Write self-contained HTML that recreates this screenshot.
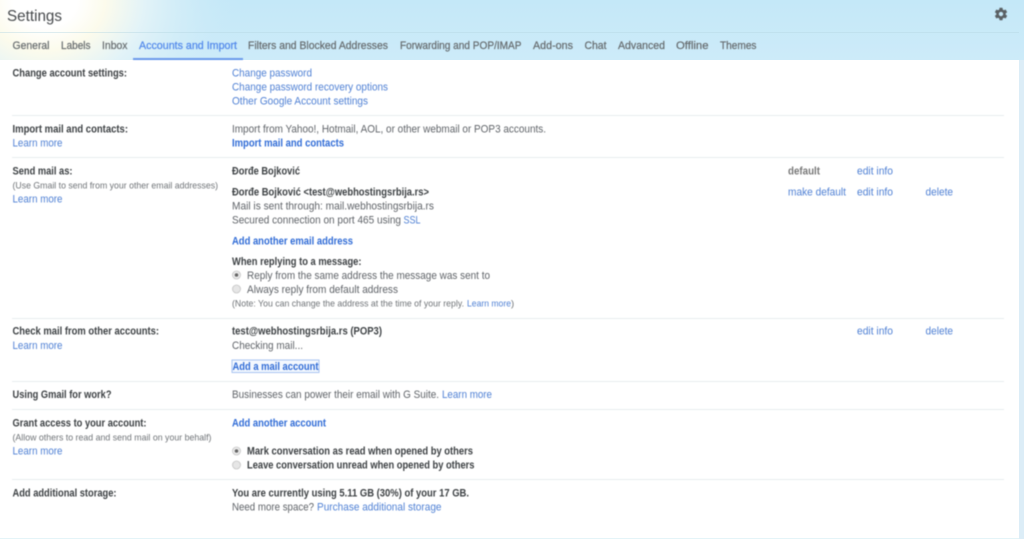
<!DOCTYPE html>
<html><head><meta charset="utf-8"><title>Settings</title>
<style>
html,body{margin:0;padding:0;background:#c5e8f8;width:1024px;height:539px;overflow:hidden}
svg{display:block}
.fg{filter:blur(.5px)}
text{font-family:"Liberation Sans",sans-serif;font-size:11px;fill:#5f6368;white-space:pre}
.b{font-weight:bold;fill:#3c4043}
.l{fill:#4f80d4}
.lb{font-weight:bold;fill:#2f6bd6}
.s{font-size:9.5px;fill:#6f7377}
.t{font-size:11px;fill:#666b6e;stroke:#666b6e;stroke-width:.22px}
</style></head><body>
<svg width="1024" height="539" viewBox="0 0 1024 539" xmlns="http://www.w3.org/2000/svg">
<defs>
<radialGradient id="g" cx="45" cy="0" r="200" gradientUnits="userSpaceOnUse" gradientTransform="scale(1 .85)">
<stop offset="0" stop-color="#ffffff"/><stop offset=".16" stop-color="#ffffff"/><stop offset=".3" stop-color="#fcfbec"/><stop offset=".5" stop-color="#e2f3f8"/><stop offset="1" stop-color="#c5e8f8" stop-opacity="0"/>
</radialGradient>
<linearGradient id="r" x1="0" y1="0" x2="0" y2="1"><stop offset="0" stop-color="#c4e8f8"/><stop offset="1" stop-color="#cdebf9"/></linearGradient>
</defs>
<rect width="1024" height="539" fill="#dcedf7"/>
<rect width="1024" height="60" fill="url(#r)"/>
<rect width="320" height="60" fill="url(#g)"/>
<rect x="0" y="60" width="1019" height="478" fill="#fff"/>
<rect x="0" y="538" width="1019" height="1" fill="#e4f4f8"/>
<rect x="0" y="32" width="1019" height="1" fill="#b5d6e3" opacity=".45"/>

<g class="fg">
<text x="7" y="21" style="font-size:16px;fill:#45484b" textLength="55" lengthAdjust="spacingAndGlyphs">Settings</text>
<path transform="translate(993.500,6.500) scale(.625)" fill="#5a6064" d="M19.43 12.98c.04-.32.07-.64.07-.98s-.03-.66-.07-.98l2.11-1.65c.19-.15.24-.42.12-.64l-2-3.46c-.12-.22-.39-.3-.61-.22l-2.49 1c-.52-.4-1.08-.73-1.69-.98l-.38-2.65C14.46 2.18 14.25 2 14 2h-4c-.25 0-.46.18-.49.42l-.38 2.65c-.61.25-1.17.59-1.69.98l-2.49-1c-.23-.09-.49 0-.61.22l-2 3.46c-.13.22-.07.49.12.64l2.11 1.65c-.04.32-.07.65-.07.98s.03.66.07.98l-2.11 1.65c-.19.15-.24.42-.12.64l2 3.46c.12.22.39.3.61.22l2.49-1c.52.4 1.08.73 1.69.98l.38 2.65c.03.24.24.42.49.42h4c.25 0 .46-.18.49-.42l.38-2.65c.61-.25 1.17-.59 1.69-.98l2.49 1c.23.09.49 0 .61-.22l2-3.46c.12-.22.07-.49-.12-.64l-2.11-1.65zM12 15.5c-1.93 0-3.5-1.57-3.5-3.5s1.57-3.5 3.5-3.5 3.5 1.57 3.5 3.5-1.57 3.5-3.5 3.5z"/>

<g class="tabs">
<text class="t" x="12.500" y="49" textLength="37" lengthAdjust="spacingAndGlyphs">General</text>
<text class="t" x="61" y="49" textLength="29.500" lengthAdjust="spacingAndGlyphs">Labels</text>
<text class="t" x="102" y="49" textLength="25.500" lengthAdjust="spacingAndGlyphs">Inbox</text>
<text class="t" x="139" y="49" textLength="98" lengthAdjust="spacingAndGlyphs" style="fill:#4f86ea;stroke:#4f86ea">Accounts and Import</text>
<text class="t" x="248" y="49" textLength="140" lengthAdjust="spacingAndGlyphs">Filters and Blocked Addresses</text>
<text class="t" x="400" y="49" textLength="121.500" lengthAdjust="spacingAndGlyphs">Forwarding and POP/IMAP</text>
<text class="t" x="533" y="49" textLength="40" lengthAdjust="spacingAndGlyphs">Add-ons</text>
<text class="t" x="584.500" y="49" textLength="22" lengthAdjust="spacingAndGlyphs">Chat</text>
<text class="t" x="618" y="49" textLength="47" lengthAdjust="spacingAndGlyphs">Advanced</text>
<text class="t" x="676" y="49" textLength="32.500" lengthAdjust="spacingAndGlyphs">Offline</text>
<text class="t" x="720" y="49" textLength="36.500" lengthAdjust="spacingAndGlyphs">Themes</text>
</g>
<rect x="133" y="58" width="110" height="2" fill="#6d9bec"/>

<g fill="#e8ecee">
<rect x="12" y="115" width="992" height="1"/>
<rect x="12" y="157" width="992" height="1"/>
<rect x="12" y="318" width="992" height="1"/>
<rect x="12" y="381" width="992" height="1"/>
<rect x="12" y="409" width="992" height="1"/>
<rect x="12" y="479" width="992" height="1"/>
</g>

<text class="b" x="12.500" y="76.500" textLength="114.500" lengthAdjust="spacingAndGlyphs">Change account settings:</text>
<text class="l" x="232" y="76.500" textLength="80" lengthAdjust="spacingAndGlyphs">Change password</text>
<text class="l" x="232" y="90.500" textLength="156" lengthAdjust="spacingAndGlyphs">Change password recovery options</text>
<text class="l" x="232" y="104.500" textLength="136" lengthAdjust="spacingAndGlyphs">Other Google Account settings</text>

<text class="b" x="12.500" y="132.500" textLength="115.500" lengthAdjust="spacingAndGlyphs">Import mail and contacts:</text>
<text class="l" x="12.500" y="146.500" textLength="50" lengthAdjust="spacingAndGlyphs">Learn more</text>
<text x="232" y="132.500" textLength="314" lengthAdjust="spacingAndGlyphs">Import from Yahoo!, Hotmail, AOL, or other webmail or POP3 accounts.</text>
<text class="lb" x="232" y="146.500" textLength="112" lengthAdjust="spacingAndGlyphs">Import mail and contacts</text>

<text class="b" x="12.500" y="174.500" textLength="60" lengthAdjust="spacingAndGlyphs">Send mail as:</text>
<text class="s" x="12.500" y="188.500" textLength="205.500" lengthAdjust="spacingAndGlyphs">(Use Gmail to send from your other email addresses)</text>
<text class="l" x="12.500" y="202.500" textLength="50" lengthAdjust="spacingAndGlyphs">Learn more</text>
<text class="b" x="232" y="174.500" textLength="68" lengthAdjust="spacingAndGlyphs">Đorđe Bojković</text>
<text x="788" y="174.500" textLength="32" lengthAdjust="spacingAndGlyphs" style="font-weight:bold;fill:#777">default</text>
<text class="l" x="857" y="174.500" textLength="36" lengthAdjust="spacingAndGlyphs">edit info</text>
<text class="b" x="232" y="195.500" textLength="197" lengthAdjust="spacingAndGlyphs">Đorđe Bojković &lt;test@webhostingsrbija.rs&gt;</text>
<text class="l" x="788" y="195.500" textLength="58" lengthAdjust="spacingAndGlyphs">make default</text>
<text class="l" x="857" y="195.500" textLength="36" lengthAdjust="spacingAndGlyphs">edit info</text>
<text class="l" x="925.500" y="195.500" textLength="27.500" lengthAdjust="spacingAndGlyphs">delete</text>
<text x="232" y="209.500" textLength="202" lengthAdjust="spacingAndGlyphs">Mail is sent through: mail.webhostingsrbija.rs</text>
<text x="232" y="223.500" textLength="169" lengthAdjust="spacingAndGlyphs">Secured connection on port 465 using</text>
<text class="l" x="403.500" y="223.500" textLength="17" lengthAdjust="spacingAndGlyphs">SSL</text>
<text class="lb" x="232" y="244.500" textLength="121" lengthAdjust="spacingAndGlyphs">Add another email address</text>
<text class="b" x="232" y="265" textLength="129.500" lengthAdjust="spacingAndGlyphs">When replying to a message:</text>
<circle cx="236.500" cy="275" r="4" fill="#ececec" stroke="#c4c4c4" stroke-width=".8"/><circle cx="236.500" cy="275" r="1.800" fill="#666"/>
<text x="247" y="279" textLength="243" lengthAdjust="spacingAndGlyphs">Reply from the same address the message was sent to</text>
<circle cx="236.500" cy="289" r="4" fill="#e6e6e6" stroke="#c4c4c4" stroke-width=".8"/>
<text x="247" y="293" textLength="151" lengthAdjust="spacingAndGlyphs">Always reply from default address</text>
<text class="s" x="232" y="306.500" textLength="232" lengthAdjust="spacingAndGlyphs">(Note: You can change the address at the time of your reply.</text>
<text class="s" x="467" y="306.500" textLength="44" lengthAdjust="spacingAndGlyphs" style="fill:#4f80d4">Learn more</text>
<text class="s" x="511" y="306.500">)</text>

<text class="b" x="12.500" y="334.500" textLength="146.500" lengthAdjust="spacingAndGlyphs">Check mail from other accounts:</text>
<text class="l" x="12.500" y="349" textLength="50" lengthAdjust="spacingAndGlyphs">Learn more</text>
<text class="b" x="232" y="334.500" textLength="150" lengthAdjust="spacingAndGlyphs">test@webhostingsrbija.rs (POP3)</text>
<text class="l" x="857" y="334.500" textLength="36" lengthAdjust="spacingAndGlyphs">edit info</text>
<text class="l" x="925.500" y="334.500" textLength="27.500" lengthAdjust="spacingAndGlyphs">delete</text>
<text x="232" y="349" textLength="71" lengthAdjust="spacingAndGlyphs">Checking mail...</text>
<rect x="232" y="360" width="87" height="12.500" fill="#f4f8fe" stroke="#a9c4f2" stroke-width="1"/>
<text class="lb" x="232.500" y="370" textLength="86" lengthAdjust="spacingAndGlyphs">Add a mail account</text>

<text class="b" x="12.500" y="398" textLength="99" lengthAdjust="spacingAndGlyphs">Using Gmail for work?</text>
<text x="232" y="398" textLength="207" lengthAdjust="spacingAndGlyphs">Businesses can power their email with G Suite.</text>
<text class="l" x="442" y="398" textLength="50" lengthAdjust="spacingAndGlyphs">Learn more</text>

<text class="b" x="12.500" y="426.500" textLength="134" lengthAdjust="spacingAndGlyphs">Grant access to your account:</text>
<text class="s" x="12.500" y="440.500" textLength="199" lengthAdjust="spacingAndGlyphs">(Allow others to read and send mail on your behalf)</text>
<text class="l" x="12.500" y="454.500" textLength="50" lengthAdjust="spacingAndGlyphs">Learn more</text>
<text class="lb" x="232" y="426.500" textLength="94" lengthAdjust="spacingAndGlyphs">Add another account</text>
<circle cx="236.500" cy="451" r="4" fill="#ececec" stroke="#c4c4c4" stroke-width=".8"/><circle cx="236.500" cy="451" r="1.800" fill="#666"/>
<text class="b" x="247" y="454.500" textLength="226" lengthAdjust="spacingAndGlyphs">Mark conversation as read when opened by others</text>
<circle cx="236.500" cy="465" r="4" fill="#e6e6e6" stroke="#c4c4c4" stroke-width=".8"/>
<text class="b" x="247" y="468.500" textLength="227.500" lengthAdjust="spacingAndGlyphs">Leave conversation unread when opened by others</text>

<text class="b" x="12.500" y="496.500" textLength="104" lengthAdjust="spacingAndGlyphs">Add additional storage:</text>
<text class="b" x="232" y="496.500" textLength="237" lengthAdjust="spacingAndGlyphs">You are currently using 5.11 GB (30%) of your 17 GB.</text>
<text x="232" y="510.500" textLength="82" lengthAdjust="spacingAndGlyphs">Need more space?</text>
<text class="l" x="317" y="510.500" textLength="124.500" lengthAdjust="spacingAndGlyphs">Purchase additional storage</text>
</g>
</svg>
</body></html>
